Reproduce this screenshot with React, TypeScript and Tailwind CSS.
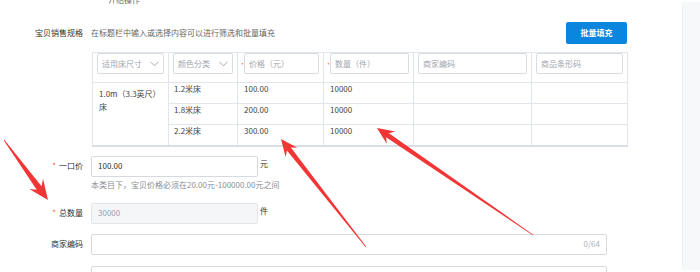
import React from 'react';

const font = { fontFamily: '"Noto Sans CJK SC", "Noto Sans", sans-serif' };

type Pt = [number, number];

// red annotation arrow: thin tail widening into a head at the tip
const arrowPoints = (tail: Pt, tip: Pt, headLen: number, headW: number, shaftW: number) => {
  const [x1, y1] = tail;
  const [x2, y2] = tip;
  const len = Math.hypot(x2 - x1, y2 - y1);
  const ux = (x2 - x1) / len;
  const uy = (y2 - y1) / len;
  const nx = -uy;
  const ny = ux;
  const bx = x2 - ux * headLen;
  const by = y2 - uy * headLen;
  const ix = x2 - ux * headLen * 0.75;
  const iy = y2 - uy * headLen * 0.75;
  const pts: Pt[] = [
    [x1 + nx * 0.4, y1 + ny * 0.4],
    [ix + nx * shaftW / 2, iy + ny * shaftW / 2],
    [bx + nx * headW / 2, by + ny * headW / 2],
    [x2, y2],
    [bx - nx * headW / 2, by - ny * headW / 2],
    [ix - nx * shaftW / 2, iy - ny * shaftW / 2],
    [x1 - nx * 0.4, y1 - ny * 0.4],
  ];
  return pts.map((p) => p.join(',')).join(' ');
};

const Chevron = () => (
  <svg width="9" height="6" viewBox="0 0 9 6" className="shrink-0">
    <path d="M0.5 0.8 L4.5 4.8 L8.5 0.8" fill="none" stroke="#9aa0aa" strokeWidth="0.9" />
  </svg>
);

const HeadSelect: React.FC<{ text: string }> = ({ text }) => (
  <div className="h-[21px] border border-[#d9dce2] rounded-[2px] bg-white flex items-center justify-between pl-[4px] pr-[4px] text-[#a3a6ad]">
    <span>{text}</span>
    <Chevron />
  </div>
);

const HeadInput: React.FC<{ text: string; required?: boolean }> = ({ text, required }) => (
  <div className="flex items-center">
    <span className={`w-[5px] shrink-0 text-[#ff7a45] text-[7px] leading-none ${required ? '' : 'invisible'}`}>•</span>
    <div className="flex-1 h-[21px] border border-[#d9dce2] rounded-[2px] bg-white flex items-center pl-[4px] text-[#a3a6ad]">
      {text}
    </div>
  </div>
);

const rows = [
  { color: '1.2米床', price: '100.00', qty: '10000' },
  { color: '1.8米床', price: '200.00', qty: '10000' },
  { color: '2.2米床', price: '300.00', qty: '10000' },
];

const cell = 'border border-[#e1e5ec] align-top';

export default function App() {
  return (
    <div className="relative w-[700px] h-[272px] bg-white overflow-hidden text-[8px] text-[#333]" style={font}>
      <div className="flex h-full">
        <div className="flex-1">
          {/* clipped hint from the section above */}
          <div className="h-[5px] overflow-hidden pl-[108px] text-[#666]">
            <div className="-mt-[6px] leading-[11px]">介绍操作</div>
          </div>

          {/* spec header */}
          <div className="mt-[17px] flex items-center w-[627px] h-[22px]">
            <div className="w-[91px] pr-[8px] text-right">宝贝销售规格</div>
            <div className="flex-1 text-[#666]">在标题栏中输入或选择内容可以进行筛选和批量填充</div>
            <button className="h-[22px] w-[61px] rounded-[2px] bg-[#0b86de] text-white font-semibold">批量填充</button>
          </div>

          {/* spec table */}
          <div className="mt-[8px] pl-[92px]">
            <table className="border-collapse table-fixed w-[535px] border-b-2 border-b-[#d9dde5]">
              <colgroup>
                <col className="w-[76px]" />
                <col className="w-[69px]" />
                <col className="w-[86px]" />
                <col className="w-[90px]" />
                <col className="w-[118px]" />
                <col className="w-[96px]" />
              </colgroup>
              <thead>
                <tr className="h-[30px]">
                  <th className={`${cell} font-normal align-middle px-[4px]`}><HeadSelect text="适用床尺寸" /></th>
                  <th className={`${cell} font-normal align-middle px-[4px]`}><HeadSelect text="颜色分类" /></th>
                  <th className={`${cell} font-normal align-middle pl-[1px] pr-[4px]`}><HeadInput text="价格（元）" required /></th>
                  <th className={`${cell} font-normal align-middle pl-[1px] pr-[4px]`}><HeadInput text="数量（件）" required /></th>
                  <th className={`${cell} font-normal align-middle px-[4px]`}>
                    <div className="h-[21px] border border-[#d9dce2] rounded-[2px] flex items-center pl-[4px] text-[#a3a6ad] text-left">商家编码</div>
                  </th>
                  <th className={`${cell} font-normal align-middle px-[4px]`}>
                    <div className="h-[21px] border border-[#d9dce2] rounded-[2px] flex items-center pl-[4px] text-[#a3a6ad] text-left">商品条形码</div>
                  </th>
                </tr>
              </thead>
              <tbody>
                {rows.map((r, i) => (
                  <tr key={r.color} className="h-[21px]">
                    {i === 0 && (
                      <td rowSpan={3} className={`${cell} px-[6px] pt-[4px] leading-[13px] text-[#444]`}>
                        1.0m（3.3英尺）床
                      </td>
                    )}
                    <td className={`${cell} align-middle px-[5px] text-[#444]`}>{r.color}</td>
                    <td className={`${cell} align-middle px-[6px] text-[#444]`}>{r.price}</td>
                    <td className={`${cell} align-middle px-[6px] text-[#444]`}>{r.qty}</td>
                    <td className={cell}></td>
                    <td className={cell}></td>
                  </tr>
                ))}
              </tbody>
            </table>
          </div>

          {/* price */}
          <div className="mt-[9px] flex items-center">
            <div className="w-[91px] pr-[8px] text-right text-[#333]"><span className="text-[#ff5a4f] mr-[3px]">*</span>一口价</div>
            <div className="w-[167px] h-[21px] border border-[#d6d9e0] rounded-[2px] flex items-center pl-[6px]">100.00</div>
            <span className="ml-[2px] -mt-[4px]">元</span>
          </div>
          <div className="pl-[91px] mt-[2px] h-[12px] leading-[12px] text-[#8a8d94]">本类目下，宝贝价格必须在20.00元-100000.00元之间</div>

          {/* quantity */}
          <div className="mt-[12px] flex items-center">
            <div className="w-[91px] pr-[8px] text-right"><span className="text-[#ff5a4f] mr-[3px]">*</span>总数量</div>
            <div className="w-[167px] h-[21px] border border-[#e3e5ea] rounded-[2px] bg-[#f5f6f8] flex items-center pl-[6px] text-[#9a9da4]">30000</div>
            <span className="ml-[2px] -mt-[4px]">件</span>
          </div>

          {/* merchant code */}
          <div className="mt-[10px] flex items-center">
            <div className="w-[91px] pr-[8px] text-right">商家编码</div>
            <div className="w-[516px] h-[21px] border border-[#d6d9e0] rounded-[2px] flex items-center justify-end pr-[6px] text-[#aeb1b7]">0/64</div>
          </div>
          <div className="mt-[11px] ml-[91px] w-[516px] h-[21px] border border-[#d6d9e0] rounded-[2px]"></div>
        </div>

        <div className="w-[18px] mt-[2px] mb-[2px] bg-[#f7f8fa] border-l border-[#f0f1f4]"></div>
      </div>

      {/* annotation arrows */}
      <svg className="absolute inset-0 pointer-events-none" width="700" height="272">
        <polygon points={arrowPoints([4, 140], [48, 200], 20, 17, 6)} fill="#f43535" />
        <polygon points={arrowPoints([366, 247], [281, 139], 17, 15, 5)} fill="#f43535" />
        <polygon points={arrowPoints([533, 235], [377, 128], 17, 15, 5)} fill="#f43535" />
      </svg>
    </div>
  );
}
